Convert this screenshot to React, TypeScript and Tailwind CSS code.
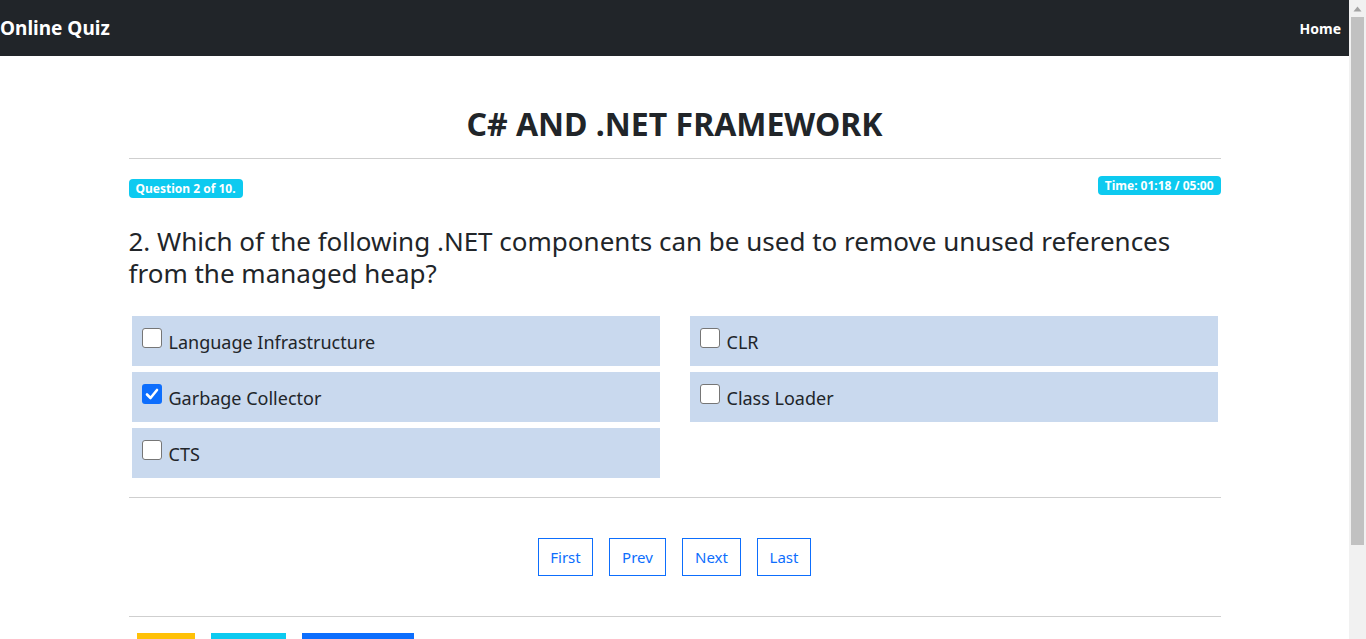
import React from "react";

const font = { fontFamily: '"Noto Sans", "Open Sans", sans-serif' };

function Box({ checked }: { checked?: boolean }) {
  if (checked) {
    return (
      <span className="w-5 h-5 rounded-[3px] bg-[#0d6efd] flex items-center justify-center shrink-0">
        <svg width="16" height="16" viewBox="0 0 16 16">
          <path d="M3 8.5 L6.5 12 L13 4" fill="none" stroke="white" strokeWidth="2.6" strokeLinecap="round" strokeLinejoin="round" />
        </svg>
      </span>
    );
  }
  return <span className="w-5 h-5 rounded-[3px] bg-white border border-[#767676] shrink-0" />;
}

function Option({ label, checked }: { label: string; checked?: boolean }) {
  return (
    <div className="h-[50px] bg-[#c9d9ee] flex items-start pl-[10px] pt-[12px]">
      <Box checked={checked} />
      <span className="ml-[7px] text-[18px] leading-[28px] text-[#212529]">{label}</span>
    </div>
  );
}

function NavBtn({ label, w }: { label: string; w: string }) {
  return (
    <button className={`h-[38px] ${w} border border-[#0d6efd] text-[#0d6efd] text-[15px] flex items-center justify-center bg-white`}>
      {label}
    </button>
  );
}

function Scrollbar() {
  return (
    <div className="w-[17px] h-screen bg-[#f1f1f1] flex flex-col items-center shrink-0">
      <div className="h-[17px] flex items-center justify-center">
        <svg width="9" height="6" viewBox="0 0 9 6">
          <path d="M0.5 5.5 L4.5 0.5 L8.5 5.5 Z" fill="#a3a3a3" />
        </svg>
      </div>
      <div className="w-[13px] h-[528px] bg-[#c1c1c1]" />
    </div>
  );
}

export default function App() {
  return (
    <div className="h-screen overflow-hidden flex bg-white text-[#212529]" style={font}>
      <div className="flex-1 min-w-0">
        <nav className="h-14 bg-[#212529] flex items-center justify-between pr-[8px]">
          <span className="text-white font-bold text-[19px]">Online Quiz</span>
          <span className="text-white font-bold text-[14px]">Home</span>
        </nav>
        <div className="w-[1092px] mx-auto">
          <h1 className="mt-[49px] text-center font-bold text-[32px] leading-[38px]">C# AND .NET FRAMEWORK</h1>
          <div className="mt-[15px] border-t border-[#cfcfcf]" />
          <div className="mt-[19px] h-[20px] flex justify-between items-start">
            <span className="mt-[1px] bg-[#0dcaf0] text-white font-bold text-[12px] leading-[19px] px-[7px] rounded-[4px]">Question 2 of 10.</span>
            <span className="-mt-[2px] bg-[#0dcaf0] text-white font-bold text-[12px] leading-[19px] px-[7px] rounded-[4px]">Time: 01:18 / 05:00</span>
          </div>
          <p className="mt-[27px] text-[26px] leading-[32px]">
            2. Which of the following .NET components can be used to remove unused references from the managed heap?
          </p>
          <div className="mt-[27px] px-[3px] grid grid-cols-2 gap-x-[30px] gap-y-[6px]">
            <Option label="Language Infrastructure" />
            <Option label="CLR" />
            <Option label="Garbage Collector" checked />
            <Option label="Class Loader" />
            <Option label="CTS" />
          </div>
          <div className="mt-[19px] border-t border-[#cfcfcf]" />
          <div className="mt-[40px] flex justify-center gap-4">
            <NavBtn label="First" w="w-[55px]" />
            <NavBtn label="Prev" w="w-[57px]" />
            <NavBtn label="Next" w="w-[59px]" />
            <NavBtn label="Last" w="w-[54px]" />
          </div>
          <div className="mt-[40px] border-t border-[#cfcfcf]" />
          <div className="mt-[16px] pl-[8px] flex gap-4">
            <button className="h-[38px] w-[58px] bg-[#ffc107]" />
            <button className="h-[38px] w-[75px] bg-[#0dcaf0]" />
            <button className="h-[38px] w-[112px] bg-[#0d6efd]" />
          </div>
        </div>
      </div>
      <Scrollbar />
    </div>
  );
}
